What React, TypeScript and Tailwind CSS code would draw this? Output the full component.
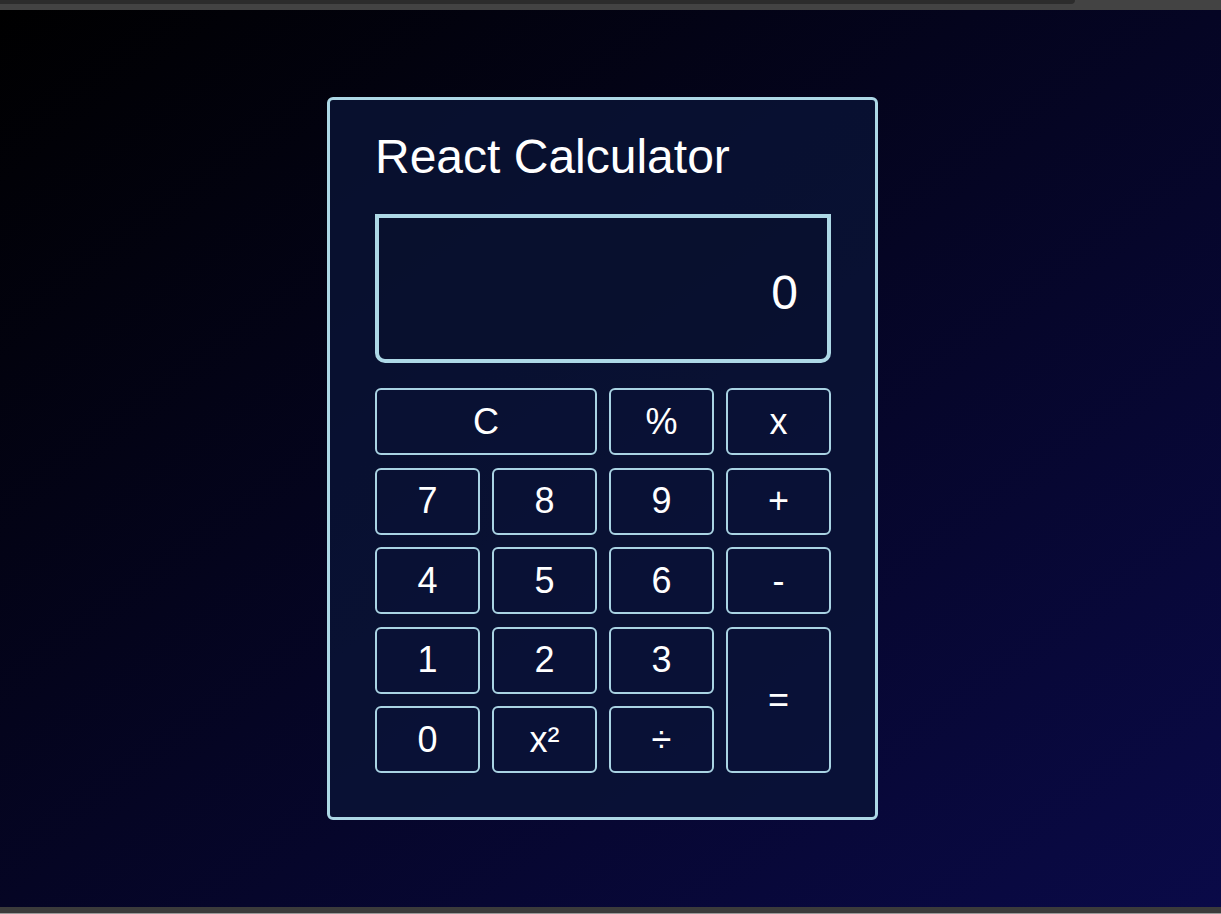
const keys: { label: string; className?: string }[] = [
  { label: "C", className: "col-span-2" },
  { label: "%" },
  { label: "x" },
  { label: "7" },
  { label: "8" },
  { label: "9" },
  { label: "+" },
  { label: "4" },
  { label: "5" },
  { label: "6" },
  { label: "-" },
  { label: "1" },
  { label: "2" },
  { label: "3" },
  { label: "=", className: "row-span-2" },
  { label: "0" },
  { label: "x²" },
  { label: "÷" },
];

export default function App() {
  return (
    <div className="flex h-[914px] w-full flex-col overflow-hidden font-['Liberation_Sans',Arial,sans-serif]">
      {/* top strip */}
      <div className="relative h-[10px] w-full bg-[#434343]">
        <div className="h-[4px] w-[1075px] rounded-br-[6px] bg-[#2c2c2c]" />
      </div>

      <main className="flex flex-1 items-center justify-center bg-[linear-gradient(to_bottom_right,#000000,#0a0a48)] pr-4">
        <div className="w-[551px] rounded-md border-[3px] border-[#add8e6] bg-[rgba(10,21,55,0.78)] pt-[29px] pr-[44px] pb-[44px] pl-[45px]">
          <h1 className="h-[55px] text-[48px] leading-[55px] text-white">React Calculator</h1>

          <div className="mt-[30px] flex h-[149px] items-end justify-end rounded-b-[10px] border-4 border-[#add8e6] bg-[rgba(6,14,40,0.25)] pr-[29px] pb-[39px]">
            <span className="text-[48px] leading-[55px] text-white">0</span>
          </div>

          <div className="mt-[25px] grid grid-cols-4 grid-rows-[repeat(5,67px)] gap-x-3 gap-y-[12.5px]">
            {keys.map((k) => (
              <button
                key={k.label}
                className={`flex items-center justify-center rounded-md border-2 border-[#a9d3e3] bg-[rgba(10,20,60,0.25)] text-[36px] leading-10 text-white ${k.className ?? ""}`}
              >
                {k.label}
              </button>
            ))}
          </div>
        </div>
      </main>

      {/* bottom strip */}
      <div className="h-[7px] w-full border-b border-[#9a9a9a] bg-[#3b3b3b]" />
    </div>
  );
}
